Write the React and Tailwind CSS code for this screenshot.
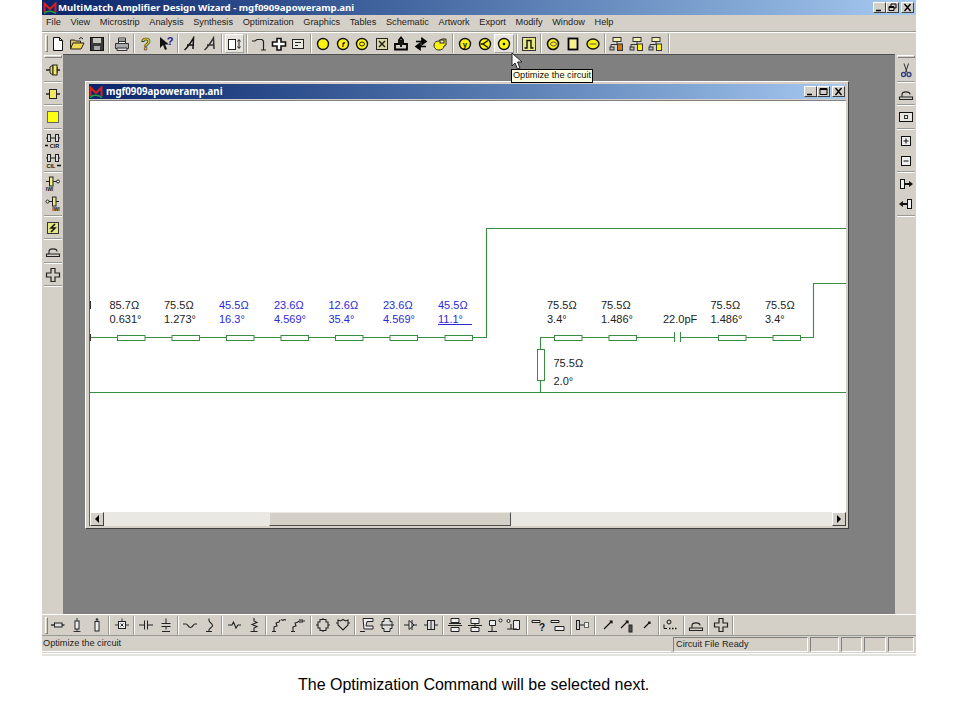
import React from "react";

const Y = "#fbf214";
const sans = "Liberation Sans, Arial, sans-serif";

// small circle helper for the yellow toolbar buttons
const Disc = ({ children }) => (
  <>
    <circle cx="8" cy="8" r="5.5" fill={Y} stroke="#111" strokeWidth="1.4" />
    {children}
  </>
);
const Letter = ({ x = 8, y = 11, size = 8, children, italic, fill = "#111", stroke = "none" }) => (
  <text x={x} y={y} textAnchor="middle" fontSize={size} fontFamily={sans} fontWeight="700" fontStyle={italic ? "italic" : "normal"} fill={fill} stroke={stroke} strokeWidth="0.6">
    {children}
  </text>
);
const Net = ({ fill }) => (
  <>
    <rect x="4" y="1.5" width="8" height="4" fill="#f4f0b0" stroke="#333" />
    <path d="M8 5.5v3M2 8.5h9M2 8.5v3" stroke="#333" />
    <rect x="1" y="11" width="4" height="3" fill="#bbb" stroke="#333" />
    <rect x="8.5" y="8" width="5" height="6.5" fill={fill} stroke="#333" />
  </>
);

const icons = {
  new: <path d="M3.5 1.5h6l3 3v10h-9zM9.5 1.5v3h3" fill="#fff" stroke="#111" />,
  open: (
    <>
      <path d="M1.5 13V4h4l1 1h5v2" fill="#d8c060" stroke="#222" />
      <path d="M1.5 13l2.500-6h11l-3 6z" fill="#f0d850" stroke="#222" />
      <path d="M10 3l2-1.500 2 1.500" stroke="#222" />
    </>
  ),
  save: (
    <>
      <rect x="1.5" y="1.5" width="13" height="13" fill="#3a3a3a" stroke="#111" />
      <rect x="4" y="2" width="8" height="5" fill="#c8c8c0" />
      <rect x="5" y="10" width="6" height="4" fill="#aaa" />
    </>
  ),
  print: (
    <>
      <path d="M4.500 7V2h7v5" fill="#fff" stroke="#333" />
      <path d="M1.500 7.500h13v5h-13z" fill="#aaa" stroke="#333" />
      <path d="M3 12h10v2.500H3zM5 4h6M5 5.500h6" fill="#ddd" stroke="#333" />
    </>
  ),
  help: <Letter y={14} size={16} fill="#e8dc20" stroke="#222">?</Letter>,
  what: (
    <>
      <path d="M2 1v11l3-3 2 5 2-1-2-4.500h4z" fill="#111" />
      <Letter x={12} y={9} size={11} fill="#202090">?</Letter>
    </>
  ),
  a1: <path d="M2.500 14C6 11 9 6 11.500 2L11 13M5 9h7" stroke="#111" strokeWidth="1.500" />,
  a2: <path d="M2.500 14C6 11 9 6 11.500 2L12 13M5 9h7" stroke="#333" strokeWidth="1.500" />,
  boxarrow: (
    <>
      <rect x="1.500" y="3.500" width="7" height="10" fill="#fff" stroke="#222" />
      <path d="M12 4v8M10.500 5.500L12 3.500l1.500 2M10.500 10.500L12 12.500l1.500-2" stroke="#222" />
    </>
  ),
  wire: <path d="M1 5h3l2-1.500h5l1.500 1.500v9M10 14h5" stroke="#222" strokeWidth="1.200" />,
  plus: <path d="M6 2.500h4v3.500h4.500v4H10v4H6v-4H1.500V6H6z" fill="#fff" stroke="#111" strokeWidth="1.600" />,
  panel: (
    <>
      <rect x="2.500" y="3.500" width="11" height="9" fill="#e8e8e0" stroke="#222" />
      <path d="M5 6.500h6M5 9.500h3" stroke="#222" />
    </>
  ),
  disc: <Disc />,
  discF: <Disc><Letter italic>f</Letter></Disc>,
  discRing: <Disc><ellipse cx="8" cy="8" rx="2.500" ry="2" stroke="#222" /></Disc>,
  xsq: (
    <>
      <rect x="2.500" y="2.500" width="11" height="11" fill="#d8d8a0" stroke="#222" />
      <path d="M5 5l6 6M11 5l-6 6" stroke="#222" strokeWidth="1.500" />
    </>
  ),
  boxup: <path d="M2 8h4V4l2-2.500L10 4v4h4v5.500H2z M8 4v7" fill="none" stroke="#000" strokeWidth="1.800" />,
  swap: <path d="M3 5.500h8M9 2.500l4 3-4 3-0-6zM13 10.500H5M7 7.500l-4 3 4 3z" fill="#000" stroke="#000" strokeWidth="1.600" />,
  blob: (
    <>
      <path d="M2 9c0-3 3-4 5-4l3-2 4 0 0 6-2 1c0 3-3 4-5 4s-5-1-5-5z" fill={Y} stroke="#222" />
      <rect x="8" y="4" width="4" height="3" fill="#e8e8d0" stroke="#222" />
    </>
  ),
  discY: <Disc><Letter>y</Letter></Disc>,
  discFork: <Disc><path d="M11 4.500L6 8l5 3.500M6 8H3.500" stroke="#111" strokeWidth="1.300" /></Disc>,
  discDot: <Disc><circle cx="8" cy="8" r="1.300" fill="#111" /></Disc>,
  pulse: (
    <>
      <rect x="1.500" y="1.500" width="13" height="13" fill="#e8e880" stroke="#333" />
      <path d="M3.500 12h2.500V4.500h4V12h2.500" stroke="#111" strokeWidth="1.400" />
    </>
  ),
  discC: (
    <>
      <circle cx="8" cy="8" r="5.500" fill={Y} stroke="#111" strokeWidth="1.600" />
      <ellipse cx="8.500" cy="8" rx="3" ry="2" stroke="#555" />
    </>
  ),
  ysq: <rect x="3.500" y="2.500" width="9" height="11" fill="#f8f090" stroke="#000" strokeWidth="1.800" />,
  oval: (
    <>
      <ellipse cx="8" cy="8" rx="6" ry="5" fill={Y} stroke="#111" strokeWidth="1.400" />
      <path d="M4.500 8h7" stroke="#555" />
    </>
  ),
  netO: <Net fill="#c87820" />,
  netY: <Net fill={Y} />,

  // left bar
  conA: (
    <>
      <path d="M1 8h4M12 5v6M12 8h3" stroke="#222" strokeWidth="1.300" />
      <path d="M5 5l3-2v10l-3-2z" fill="#ddd870" stroke="#222" />
      <rect x="8" y="3" width="4" height="10" fill="#f0e860" stroke="#222" />
    </>
  ),
  conB: (
    <>
      <path d="M1 8h3M12 8h3" stroke="#222" strokeWidth="1.300" />
      <rect x="4.500" y="3.500" width="7" height="9" fill="#f0e860" stroke="#222" />
    </>
  ),
  bigY: <rect x="2.500" y="2.500" width="11" height="11" fill="#ffff10" stroke="#666" />,
  cir: (
    <>
      <path d="M1 5h14" stroke="#222" />
      <rect x="2.500" y="1.500" width="3" height="7" fill="#ddd" stroke="#222" />
      <rect x="10.500" y="1.500" width="3" height="7" fill="#ddd" stroke="#222" />
      <path d="M0 12.500h3" stroke="#111" strokeWidth="1.500" />
      <Letter x={9.500} y={15} size={5.500}>CIR</Letter>
    </>
  ),
  cil: (
    <>
      <path d="M1 5h14" stroke="#222" />
      <rect x="2.500" y="1.500" width="3" height="7" fill="#ddd" stroke="#222" />
      <rect x="10.500" y="1.500" width="3" height="7" fill="#ddd" stroke="#222" />
      <path d="M12 12.500h4" stroke="#111" strokeWidth="1.500" />
      <Letter x={6} y={15} size={5.500}>CIL</Letter>
    </>
  ),
  iwiA: (
    <>
      <path d="M1 5.500h3M8 5.500h4" stroke="#222" />
      <rect x="4.500" y="1" width="3.500" height="9" fill="#f0e880" stroke="#222" />
      <circle cx="13" cy="5.500" r="1.500" fill="#eee" stroke="#222" />
      <Letter x={4.500} y={15} size={5}>IWI</Letter>
    </>
  ),
  iwiB: (
    <>
      <path d="M4 5.500h3M11 5.500h3" stroke="#222" />
      <rect x="7.500" y="1" width="3.500" height="9" fill="#f0e880" stroke="#222" />
      <circle cx="2.500" cy="5.500" r="1.500" fill="#eee" stroke="#222" />
      <Letter x={11} y={15} size={5}>IWI</Letter>
    </>
  ),
  ypat: (
    <>
      <rect x="2.500" y="2.500" width="11" height="11" fill="#e4e480" stroke="#333" />
      <path d="M10 4L6 8h4l-4 4" stroke="#111" strokeWidth="1.500" />
    </>
  ),
  hat: <path d="M1.500 11h13v2.500h-13zM4 11V8.500C4 5 12 5 12 8.500" fill="none" stroke="#222" strokeWidth="1.100" />,
  cross: <path d="M6 1.500h4v4.500h4.500v4H10v4.500H6V10H1.500V6H6z" fill="none" stroke="#222" strokeWidth="1.200" />,

  // right bar
  scissors: (
    <>
      <path d="M6 1.500l3 9M10.500 1.500l-3 9" stroke="#333" />
      <circle cx="5.500" cy="12.500" r="2" stroke="#304080" strokeWidth="1.300" />
      <circle cx="11" cy="12.500" r="2" stroke="#304080" strokeWidth="1.300" />
    </>
  ),
  rectDot: (
    <>
      <rect x="1.500" y="3.500" width="13" height="9" fill="#e8e8e0" stroke="#111" />
      <rect x="6.500" y="6.500" width="3" height="3" stroke="#333" />
    </>
  ),
  sqPlus: (
    <>
      <rect x="3.500" y="3.500" width="9" height="9" fill="#eee" stroke="#111" />
      <path d="M5.500 8h5M8 5.500v5" stroke="#111" />
    </>
  ),
  sqMinus: (
    <>
      <rect x="3.500" y="3.500" width="9" height="9" fill="#eee" stroke="#111" />
      <path d="M5.500 8h5" stroke="#111" />
    </>
  ),
  inR: (
    <>
      <rect x="2.500" y="3.500" width="4" height="9" fill="#eee" stroke="#111" />
      <path d="M6.500 8H12" stroke="#111" strokeWidth="2" />
      <path d="M11 5l4 3-4 3z" fill="#111" />
    </>
  ),
  inL: (
    <>
      <rect x="9.500" y="3.500" width="4" height="9" fill="#eee" stroke="#111" />
      <path d="M4 8h5.500" stroke="#111" strokeWidth="2" />
      <path d="M5 5L1 8l4 3z" fill="#111" />
    </>
  ),

  // bottom bar
  tl: (
    <>
      <path d="M1 8h4M12 8h2.500" stroke="#333" strokeWidth="1.300" />
      <rect x="4.500" y="6" width="7.500" height="4" fill="#ddd" stroke="#222" />
    </>
  ),
  tlV: (
    <>
      <path d="M8 1v3M4.500 14.500h7M8 12v2" stroke="#333" />
      <rect x="6" y="4" width="4" height="8" fill="#eee" stroke="#222" />
    </>
  ),
  tlO: (
    <>
      <circle cx="8" cy="2.500" r="1.300" fill="#333" />
      <rect x="6" y="4.500" width="4" height="9.500" fill="#eee" stroke="#222" />
    </>
  ),
  boxT: (
    <>
      <path d="M1 8h3M12 8h3M8 1.500v3" stroke="#333" />
      <rect x="4.500" y="4.500" width="7" height="7" fill="#eee" stroke="#222" />
      <path d="M6.500 6.500l3 3M9.500 6.500l-3 3" stroke="#333" />
    </>
  ),
  capH: <path d="M1 8h5.500M6.500 3.500v9M9.500 3.500v9M9.500 8H13M13 8h2" stroke="#222" />,
  capV: <path d="M8 1.500v5M3.500 6.500h9M3.500 9.500h9M8 9.500v3M4 14.500h8" stroke="#222" />,
  indH: <path d="M1 7h3c2 0 2 3.500 4.500 3.500S11 7 13 7h2" stroke="#222" strokeWidth="1.100" />,
  indV: <path d="M7 1.500v2c0 2 3.500 2.500 3.500 5S7 11 7 13v1.500M4 14.500h6" stroke="#222" strokeWidth="1.100" />,
  resH: <path d="M1 8h4l1.500-3 2.500 6 2-3h3" stroke="#222" strokeWidth="1.100" />,
  resV: <path d="M8 1v3l3 1.500-5 2 5 2-3 1.500v3M4.500 14.500h7" stroke="#222" strokeWidth="1.100" />,
  coilA: <path d="M1 14.500h4M3 14.500V10l3-1-1-3 3-1 1-2M10 3c1-1 1.500 1 2.500 0s1.500 0 2.500 0" stroke="#222" strokeWidth="1.100" />,
  coilB: <path d="M1 14.500h4M3 14.500V10l3-1-1-3 3-1 1-1M10 2v4M12 2v4M12 4h3" stroke="#222" strokeWidth="1.100" />,
  chipA: <path d="M1 8h2M13 8h2M5 2.500h6v2.500h2v6h-2v2.500H5V11H3V5h2zM8 1v1.500M8 13.500V15" fill="none" stroke="#222" strokeWidth="1.100" />,
  chipB: <path d="M1 6h2M13 6h2M3 3l2.500 1L8 2.500 10.500 4 13 3v5l-5 5-5-5z" fill="none" stroke="#222" strokeWidth="1.100" />,
  bend: <path d="M4 1.500h10v3H8L7 9h7v3H5zM1 14.500h5" fill="#eee" stroke="#222" />,
  crossBox: <path d="M5 1.500h6v3h2v7h-2v3H5v-3H3v-7h2zM3 8h10M1 8h2M13 8h2" fill="#ddd" stroke="#222" />,
  diode: <path d="M1 8h5M6 3.500l5 4.500-5 4.500zM11 8h3M9 3v10" fill="#eee" stroke="#222" />,
  rectIn: (
    <>
      <path d="M1 8h3M12 8h3" stroke="#222" />
      <rect x="4.500" y="3.500" width="7" height="9" fill="#ddd" stroke="#222" />
      <path d="M8 3.500v9" stroke="#222" />
    </>
  ),
  net1: <path d="M4 1.500h8v4H4zM2 6.500h12M4 10.500h8v4H4zM1 8.500h14" fill="#eee" stroke="#222" />,
  net2: <path d="M4 1.500h8v5H4zM1 8.500h14M4 10.500h8v4H4zM8 6.500v4" fill="#eee" stroke="#222" />,
  net3: <path d="M1 14.500h9M5 8.500v6M2.500 3.500h6v5h-6zM12 3.500a1.500 1.500 0 103 0 1.500 1.500 0 10-3 0" fill="#eee" stroke="#222" />,
  net4: <path d="M1 12h10M5 7v5M7.500 3.500h6v9h-6zM1 4a1.500 1.500 0 103 0 1.500 1.500 0 10-3 0" fill="#eee" stroke="#222" />,
  barQ: (
    <>
      <path d="M1 3.500h8v2H1z" fill="#eee" stroke="#222" />
      <Letter x={11} y={14} size={10}>?</Letter>
    </>
  ),
  bars: <path d="M1 3.500h8v2H1zM5 9.500h9v4H5z" fill="#eee" stroke="#222" />,
  rectO: (
    <>
      <rect x="1.500" y="3.500" width="3" height="9" fill="#ccc" stroke="#222" />
      <path d="M4.500 8h5" stroke="#222" />
      <rect x="9.500" y="5.500" width="4" height="5" fill="#eee" stroke="#666" />
    </>
  ),
  diagA: <path d="M4 12l8-8M9.500 4H12v2.500" stroke="#111" strokeWidth="1.200" />,
  diagB: (
    <>
      <path d="M2 11l7-7M6.500 4H9v2.500" stroke="#111" strokeWidth="1.200" />
      <rect x="10" y="8" width="3" height="7" fill="#555" stroke="#222" />
    </>
  ),
  diagC: <path d="M5 11l6-6M9 5h2v2" stroke="#111" strokeWidth="1.200" />,
  portDots: (
    <>
      <circle cx="6" cy="5" r="2" stroke="#111" />
      <path d="M1 7.500v4M1 11.500h3" stroke="#111" />
      <path d="M6 11.500h8" stroke="#111" strokeDasharray="1.500 1.500" strokeWidth="1.400" />
    </>
  ),
};

const Icon = ({ name }) => (
  <svg viewBox="0 0 16 16" className="h-4 w-4" fill="none">
    {icons[name]}
  </svg>
);

const topBar = [
  ["new", "open", "save"],
  ["print"],
  ["help", "what"],
  ["a1", "a2"],
  ["boxarrow*"],
  ["wire", "plus", "panel"],
  ["disc", "discF", "discRing", "xsq", "boxup", "swap", "blob"],
  ["discY", "discFork", "discDot*"],
  ["pulse"],
  ["discC", "ysq", "oval"],
  ["netO", "netY", "netY"],
];

const bottomBar = [
  ["tl", "tlV", "tlO"],
  ["boxT"],
  ["capH", "capV"],
  ["indH", "indV"],
  ["resH", "resV"],
  ["coilA", "coilB"],
  ["chipA", "chipB"],
  ["bend", "crossBox"],
  ["diode", "rectIn"],
  ["net1", "net2", "net3", "net4"],
  ["barQ", "bars"],
  ["rectO"],
  ["diagA", "diagB", "diagC"],
  ["portDots"],
  ["hat"],
  ["cross"],
];

const leftBar = [["conA"], ["conB"], ["bigY"], ["cir", "cil"], ["iwiA", "iwiB"], ["ypat"], ["hat"], ["cross"]];
const rightBar = [["scissors"], ["hat"], ["rectDot"], ["sqPlus", "sqMinus"], ["inR", "inL"]];

function HBar({ groups }) {
  return (
    <div className="flex h-full items-center pl-[3px]">
      <div className="h-[17px] w-[3px] border-t border-l border-t-white border-l-white border-r border-b border-r-[#808080] border-b-[#808080]" />
      {groups.map((group, i) => (
        <React.Fragment key={i}>
          {group.map((item, j) => {
            const active = item.endsWith("*");
            return (
              <div
                key={j}
                className={
                  active
                    ? "flex h-[19px] w-[19.6px] items-center justify-center border border-t-white border-l-white border-r-[#a0a0a0] border-b-[#a0a0a0] bg-[#e6e4de]"
                    : "flex h-[19px] w-[19.6px] items-center justify-center"
                }
              >
                <Icon name={active ? item.slice(0, -1) : item} />
              </div>
            );
          })}
          <div className="flex h-[19px] w-[5px] justify-center">
            <div className="h-full w-[2px] border-l border-r border-l-[#9a9a94] border-r-white" />
          </div>
        </React.Fragment>
      ))}
    </div>
  );
}

function VBar({ groups }) {
  return (
    <div className="flex w-full flex-col items-center pt-[1px]">
      <div className="mb-[2px] h-[3px] w-[18px] border-t border-l border-t-white border-l-white border-b border-r border-b-[#808080] border-r-[#808080]" />
      {groups.map((group, i) => (
        <React.Fragment key={i}>
          {group.map((item) => (
            <div key={item} className="flex h-[20px] w-full items-center justify-center">
              <Icon name={item} />
            </div>
          ))}
          <div className="flex h-[3.500px] w-[18px] flex-col justify-center">
            <div className="h-[2px] w-full border-t border-b border-t-[#9a9a94] border-b-white" />
          </div>
        </React.Fragment>
      ))}
    </div>
  );
}

const Caption = ({ kind }) => (
  <div className="flex h-[11.500px] w-[13px] items-center justify-center border border-t-white border-l-white border-r-[#404040] border-b-[#404040] bg-[#d4d0c8]">
    <svg viewBox="0 0 11 9" className="h-[9px] w-[11px]" fill="none" stroke="#000">
      {kind === "min" && <path d="M2 7.500h5" strokeWidth="1.500" />}
      {kind === "max" && <path d="M2 1.500h7v6H2zM2 2.500h7" />}
      {kind === "restore" && <path d="M4 3V1h5v4H7M2 3.500h5v4H2zM2 4.500h5" />}
      {kind === "close" && <path d="M2.500 1l6 7M8.500 1l-6 7" strokeWidth="1.400" />}
    </svg>
  </div>
);

const Logo = () => (
  <svg viewBox="0 0 14 12" className="h-[12px] w-[14px] shrink-0">
    <path d="M1.500 10V1.500L7 7l5.500-5.500V10" fill="none" stroke="#d82020" strokeWidth="2" />
    <path d="M1 11.500c3-3 8-3 12 0" fill="none" stroke="#20a040" strokeWidth="1.500" />
  </svg>
);

const menus = ["File", "View", "Microstrip", "Analysis", "Synthesis", "Optimization", "Graphics", "Tables", "Schematic", "Artwork", "Export", "Modify", "Window", "Help"];

const labels = [
  [109.500, "85.7Ω", "0.631°", 0],
  [164, "75.5Ω", "1.273°", 0],
  [219, "45.5Ω", "16.3°", 1],
  [274, "23.6Ω", "4.569°", 1],
  [328.500, "12.6Ω", "35.4°", 1],
  [383, "23.6Ω", "4.569°", 1],
  [438, "45.5Ω", "11.1°", 1],
  [547, "75.5Ω", "3.4°", 0],
  [601, "75.5Ω", "1.486°", 0],
  [710.500, "75.5Ω", "1.486°", 0],
  [765, "75.5Ω", "3.4°", 0],
];
const stubs = [117.500, 172, 226.500, 281, 335.500, 390, 445, 554.500, 609, 718.500, 773];
const green = "#3a8c42";

function Circuit() {
  return (
    <svg viewBox="90 101 756 411" className="block h-[411px] w-[756px] bg-white" fontFamily={sans} fontSize="11">
      <path d="M90 337.500H486.500V228.500H846M90 392.500H846M540.500 392.500V337.500H813.500V283.500H846" fill="none" stroke={green} strokeWidth="1.100" />
      {stubs.map((x) => (
        <rect key={x} x={x} y="335.500" width="27.500" height="5" fill="#fff" stroke={green} />
      ))}
      <rect x="537.500" y="349.500" width="7" height="31" fill="#fff" stroke={green} />
      <rect x="675" y="331" width="5" height="13" fill="#fff" />
      <path d="M674.500 332v10M680.500 332v10" stroke={green} />
      <path d="M90.500 301v8M90.500 334v7" stroke="#333" />
      {labels.map(([x, a, b, blue]) => (
        <g key={x} fill={blue ? "#2a2ad8" : "#222"}>
          <text x={x} y="309">{a}</text>
          <text x={x} y="323">{b}</text>
        </g>
      ))}
      <path d="M438 324.500H472" stroke="#2a2ad8" />
      <text x="663" y="323" fill="#222">22.0pF</text>
      <text x="553.500" y="366.500" fill="#222">75.5Ω</text>
      <text x="553.500" y="385" fill="#222">2.0°</text>
    </svg>
  );
}

const ScrollBtn = ({ d }) => (
  <div className="flex h-[14px] w-[14px] items-center justify-center border border-t-white border-l-white border-r-[#404040] border-b-[#404040] bg-[#d4d0c8]">
    <svg viewBox="0 0 6 8" className="h-[8px] w-[6px]">
      <path d={d} fill="#000" />
    </svg>
  </div>
);

export default function App() {
  return (
    <div className="relative h-[720px] w-[960px] overflow-hidden bg-white" style={{ fontFamily: sans }}>
      <div className="ml-[42px] flex h-[656px] w-[874px] flex-col bg-[#d4d0c8]">
        {/* Main title */}
        <div className="flex h-[15px] shrink-0 items-center justify-between bg-gradient-to-r from-[#0a246a] to-[#a6caf0] pl-[1px] pr-[2px]">
          <div className="flex items-center gap-[1px]">
            <Logo />
            <span className="text-[9.600px] font-bold leading-none text-white" style={{ fontFamily: "'Noto Sans', sans-serif" }}>
              MultiMatch Amplifier Design Wizard - mgf0909apoweramp.ani
            </span>
          </div>
          <div className="flex items-center gap-[2px]">
            <div className="flex">
              <Caption kind="min" />
              <Caption kind="restore" />
            </div>
            <Caption kind="close" />
          </div>
        </div>

        {/* Menu */}
        <div className="flex h-[17px] shrink-0 items-center gap-[9.650px] border-b border-b-[#9a9a94] pl-[4px] text-[9.200px] text-[#222]">
          {menus.map((m) => (
            <span key={m}>{m}</span>
          ))}
        </div>

        {/* Top toolbar */}
        <div className="h-[22px] shrink-0 border-t border-t-white">
          <HBar groups={topBar} />
        </div>

        {/* Work area */}
        <div className="flex min-h-0 flex-1">
          <div className="w-[21px] shrink-0">
            <VBar groups={leftBar} />
          </div>
          <div className="flex-1 border-t border-t-[#505050] bg-[#808080] pl-[22px] pt-[26px]">
            <div className="flex h-[448px] w-[764px] flex-col border border-t-white border-l-white border-r-[#404040] border-b-[#404040] bg-[#d4d0c8] pb-[2px] pl-[3px] pr-[2px] pt-[2px]">
              <div className="flex h-[15px] shrink-0 items-center justify-between bg-gradient-to-r from-[#0a246a] to-[#a6caf0] pr-[1px]">
                <div className="flex items-center gap-[3px]">
                  <Logo />
                  <span className="text-[9.700px] font-bold leading-none text-white" style={{ fontFamily: "'Noto Sans', sans-serif" }}>
                    mgf0909apoweramp.ani
                  </span>
                </div>
                <div className="flex items-center gap-[2px]">
                  <div className="flex">
                    <Caption kind="min" />
                    <Caption kind="max" />
                  </div>
                  <Caption kind="close" />
                </div>
              </div>
              <div className="mt-[1px] flex-1 border-t border-l border-t-[#808080] border-l-[#606060]">
                <Circuit />
                <div className="flex h-[14px] w-[756px] bg-[#e9e8e2]">
                  <ScrollBtn d="M5 0v8L1 4z" />
                  <div className="ml-[165px] h-[14px] w-[242px] border border-t-[#ece9e4] border-l-[#ece9e4] border-r-[#505050] border-b-[#505050] bg-[#d4d0c8]" />
                  <div className="flex-1" />
                  <ScrollBtn d="M1 0v8l4-4z" />
                </div>
              </div>
            </div>
          </div>
          <div className="w-[21px] shrink-0">
            <VBar groups={rightBar} />
          </div>
        </div>

        {/* Bottom toolbar */}
        <div className="h-[21px] shrink-0 border-t border-t-white">
          <HBar groups={bottomBar} />
        </div>

        {/* Status bar */}
        <div className="flex h-[18px] shrink-0 gap-[2px] border-t border-t-[#9a9a94] pb-[1px] pt-[1px] text-[9.200px] text-[#222]">
          <div className="flex w-[629px] items-center border-b border-b-white pl-[1px]">Optimize the circuit</div>
          <div className="flex w-[135px] items-center border border-t-[#808080] border-l-[#808080] border-r-white border-b-white pl-[2px]">Circuit File Ready</div>
          <div className="w-[29px] border border-t-[#808080] border-l-[#808080] border-r-white border-b-white" />
          <div className="w-[21px] border border-t-[#808080] border-l-[#808080] border-r-white border-b-white" />
          <div className="w-[22px] border border-t-[#808080] border-l-[#808080] border-r-white border-b-white" />
          <div className="w-[26px] border border-t-[#808080] border-l-[#808080] border-r-white border-b-white" />
        </div>
        <div className="h-[3px] shrink-0 border-t border-t-white bg-[#e4e2dc]" />
      </div>

      <p className="ml-[298px] mt-[21px] text-[16px] leading-[16px] text-black">The Optimization Command will be selected next.</p>

      {/* Tooltip and cursor over the toolbar */}
      <div className="absolute left-[511px] top-[68.500px] flex h-[14px] w-[82px] items-center justify-center whitespace-nowrap border border-black bg-[#ffffe1] text-[9.200px] text-[#111]">
        Optimize the circuit
      </div>
      <svg viewBox="0 0 13 18" className="absolute left-[510.500px] top-[52px] h-[18px] w-[13px]">
        <path d="M1 1v13l3-3 2.500 6 2.500-1-2.500-6H11z" fill="#fff" stroke="#222" strokeWidth="1" />
      </svg>
    </div>
  );
}
